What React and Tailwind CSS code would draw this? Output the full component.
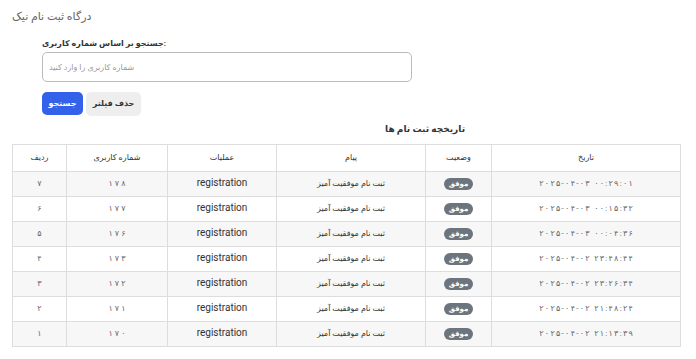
import React from 'react';

const rows = [
  { id: '۷', user: '۱۷۸', date: '۲۰۲۵-۰۴-۰۳ ۰۰:۲۹:۰۱' },
  { id: '۶', user: '۱۷۷', date: '۲۰۲۵-۰۴-۰۳ ۰۰:۱۵:۳۲' },
  { id: '۵', user: '۱۷۶', date: '۲۰۲۵-۰۴-۰۳ ۰۰:۰۴:۳۶' },
  { id: '۴', user: '۱۷۳', date: '۲۰۲۵-۰۴-۰۲ ۲۳:۴۸:۴۴' },
  { id: '۳', user: '۱۷۲', date: '۲۰۲۵-۰۴-۰۲ ۲۳:۲۶:۳۴' },
  { id: '۲', user: '۱۷۱', date: '۲۰۲۵-۰۴-۰۲ ۲۱:۴۸:۲۴' },
  { id: '۱', user: '۱۷۰', date: '۲۰۲۵-۰۴-۰۲ ۲۱:۱۳:۳۹' },
];

// Persian digits render tight in DejaVu, spread them out per glyph
const Spaced = ({ text, gap }) => (
  <span dir="ltr" className="inline-flex">
    {text.split('').map((ch, i) => (
      <span key={i} className={gap}>{ch === ' ' ? '\u00a0' : ch}</span>
    ))}
  </span>
);

const App = () => {
  return (
    <div className="min-h-[359px] bg-white px-3 pt-[9px] font-['Roboto','DejaVu_Sans',sans-serif] text-[#333]">
      {/* Title */}
      <h1 className="text-[11px] leading-[16px] text-[#666]">درگاه ثبت نام نیک</h1>

      {/* Search form */}
      <div className="ml-[30px] mt-[13px] w-[370px]">
        <label className="block text-[8px] font-bold leading-[12px] text-[#333]">جستجو بر اساس شماره کاربری:</label>
        <input
          type="text"
          placeholder="شماره کاربری را وارد کنید"
          className="mt-[2px] h-[30px] w-full rounded-[5px] border border-[#bbb] px-[6px] text-[8px] placeholder-[#999] focus:outline-none"
        />
        <div className="mt-[10px] flex gap-[3px]">
          <button className="h-[23px] w-[41px] rounded-[5px] bg-[#3461ea] text-[8px] font-bold text-white">جستجو</button>
          <button className="h-[24px] w-[55px] rounded-[5px] bg-[#eeeeee] text-[8px] font-bold text-[#333]">حذف فیلتر</button>
        </div>
      </div>

      {/* History heading */}
      <h2 className="ml-[373px] mt-[6px] text-[9px] font-bold leading-[14px]">تاریخچه ثبت نام ها</h2>

      {/* Table */}
      <table className="mt-[8px] w-[669px] border-collapse text-center text-[8px]">
        <thead>
          <tr className="h-[27px]">
            <th className="w-[54px] border border-[#ddd] font-normal">ردیف</th>
            <th className="w-[101px] border border-[#ddd] font-normal">شماره کاربری</th>
            <th className="w-[109px] border border-[#ddd] font-normal">عملیات</th>
            <th className="w-[149px] border border-[#ddd] font-normal">پیام</th>
            <th className="w-[66px] border border-[#ddd] font-normal">وضعیت</th>
            <th className="border border-[#ddd] font-normal">تاریخ</th>
          </tr>
        </thead>
        <tbody>
          {rows.map((r, i) => (
            <tr key={r.id} className={`h-[25px] ${i % 2 === 0 ? 'bg-[#f7f7f7]' : 'bg-white'}`}>
              <td className="border border-[#ddd] text-[#666]">{r.id}</td>
              <td className="border border-[#ddd] text-[#666]">
                <Spaced text={r.user} gap="mx-[1px]" />
              </td>
              <td className="border border-[#ddd] pb-[4px] text-[10px] text-[#333]">registration</td>
              <td className="border border-[#ddd] text-[#333]">ثبت نام موفقیت آمیز</td>
              <td className="border border-[#ddd]">
                <span className="inline-block rounded-full bg-[#6c757d] px-[5px] py-[1px] text-[7px] font-bold text-white">موفق</span>
              </td>
              <td className="border border-[#ddd] text-[#666]">
                <Spaced text={r.date} gap="mx-[0.65px]" />
              </td>
            </tr>
          ))}
        </tbody>
      </table>
    </div>
  );
};

export default App;
